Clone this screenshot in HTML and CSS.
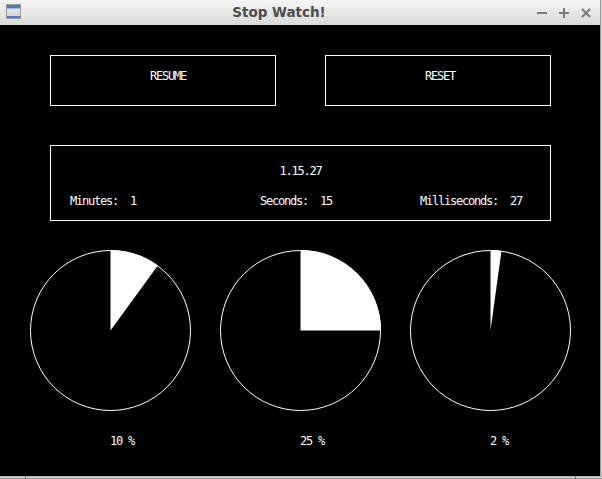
FILE: index.html
```html
<!DOCTYPE html>
<html>
<head>
<meta charset="utf-8">
<title>Stop Watch!</title>
<link rel="stylesheet" href="styles.css">
</head>
<body>
<div class="window">
  <div class="upper">
    <div class="main">
      <div class="titlebar">
        <svg class="app-icon" width="15" height="15" viewBox="0 0 15 15">
          <defs>
            <linearGradient id="ig" x1="0" y1="0" x2="0" y2="1">
              <stop offset="0" stop-color="#f2f2f2"/>
              <stop offset="1" stop-color="#cfcfcf"/>
            </linearGradient>
          </defs>
          <rect x="0.5" y="0.5" width="14" height="14" fill="url(#ig)" stroke="#9a9a9a"/>
          <rect x="1" y="1" width="13" height="3" fill="#4a7cc9"/>
          <rect x="1" y="4" width="13" height="1" fill="#9cb8e4"/>
          <rect x="1" y="12" width="13" height="2" fill="#4a7cc9"/>
        </svg>
        <div class="title">Stop Watch!</div>
        <div class="controls">
          <svg width="10" height="10" viewBox="0 0 10 10"><path d="M0 5H10" class="ctl"/></svg>
          <svg width="10" height="10" viewBox="0 0 10 10"><path d="M0 5H10M5 0V10" class="ctl"/></svg>
          <svg width="10" height="10" viewBox="0 0 10 10"><path d="M1 1L9 9M9 1L1 9" class="ctl"/></svg>
        </div>
      </div>
      <div class="content">
        <div class="buttons">
          <div class="btn">RESUME</div>
          <div class="btn">RESET</div>
        </div>
        <div class="display">
          <div class="time">1.15.27</div>
          <div class="fields">
            <span>Minutes:  1</span>
            <span>Seconds:  15</span>
            <span>Milliseconds:  27</span>
          </div>
        </div>
        <div class="pies">
          <div class="pie">
            <svg width="161" height="161" viewBox="0 0 161 161">
              <circle cx="80.5" cy="80.5" r="80" class="ring"/>
              <path d="M80.5 80.5L80.5 0A80.5 80.5 0 0 1 127.82 15.38Z" class="wedge"/>
            </svg>
            <div class="pct">10 %</div>
          </div>
          <div class="pie">
            <svg width="161" height="161" viewBox="0 0 161 161">
              <circle cx="80.5" cy="80.5" r="80" class="ring"/>
              <path d="M80.5 80.5L80.5 0A80.5 80.5 0 0 1 161 80.5Z" class="wedge"/>
            </svg>
            <div class="pct">25 %</div>
          </div>
          <div class="pie">
            <svg width="161" height="161" viewBox="0 0 161 161">
              <circle cx="80.5" cy="80.5" r="80" class="ring"/>
              <path d="M80.5 80.5L80.5 0A80.5 80.5 0 0 1 91.5 0.8Z" class="wedge"/>
            </svg>
            <div class="pct">2 %</div>
          </div>
        </div>
      </div>
    </div>
    <div class="edge-right"></div>
  </div>
  <div class="edge-bottom">
    <div class="seg seg-a"></div>
    <div class="tick"></div>
    <div class="seg seg-b"></div>
    <div class="tick"></div>
    <div class="seg seg-c"></div>
  </div>
</div>
</body>
</html>
```

FILE: styles.css
```css
html, body {
  margin: 0;
  padding: 0;
  background: #000;
}

.window {
  width: 602px;
  height: 479px;
  display: flex;
  flex-direction: column;
  overflow: hidden;
}

.upper {
  display: flex;
  height: 476px;
}

.main {
  width: 600px;
  display: flex;
  flex-direction: column;
}

.titlebar {
  height: 25px;
  flex: none;
  display: flex;
  align-items: center;
  background: linear-gradient(#f5f5f5, #d9d9d9);
}

.app-icon {
  flex: none;
  align-self: flex-start;
  margin-top: 4px;
  margin-left: 6px;
}

.title {
  flex: 1;
  text-align: center;
  font-family: "DejaVu Sans", sans-serif;
  font-weight: bold;
  font-size: 13.5px;
  line-height: 25px;
  color: #4c4c4c;
}

.controls {
  flex: none;
  display: flex;
  gap: 12px;
  margin-right: 9px;
}

.ctl {
  fill: none;
  stroke: #7b7b7b;
  stroke-width: 2;
}

.content {
  flex: 1;
  background: #000;
  color: #fff;
  padding-top: 30px;
  font-family: "DejaVu Sans Mono", monospace;
  font-size: 12px;
  line-height: 13px;
  letter-spacing: -1.22px;
}

.buttons {
  display: flex;
  gap: 49px;
  padding-left: 50px;
}

.btn {
  width: 125px;
  height: 35px;
  padding: 14px 0 0 99px;
  border: 1px solid #fff;
  white-space: pre;
}

.display {
  margin: 39px 0 0 50px;
  width: 499px;
  height: 74px;
  border: 1px solid #fff;
}

.time {
  padding-top: 19px;
  text-align: center;
  white-space: pre;
}

.fields {
  margin-top: 17px;
  padding-left: 19px;
  display: grid;
  grid-template-columns: 190px 160px auto;
  white-space: pre;
}

.pies {
  margin-top: 29px;
  padding-left: 30px;
  display: flex;
  gap: 29px;
}

.pie {
  width: 161px;
  display: flex;
  flex-direction: column;
}

.pie svg {
  display: block;
}

.ring {
  fill: none;
  stroke: #fff;
  stroke-width: 1;
}

.wedge {
  fill: #fff;
  stroke: none;
}

.pct {
  margin-top: 24px;
  padding-left: 80px;
  white-space: pre;
}

.edge-right {
  width: 2px;
  background: linear-gradient(to right, #9c9c9c 0 1px, #d4d4d4 1px 2px);
}

.edge-bottom {
  height: 3px;
  display: flex;
}

.seg {
  background: linear-gradient(#b3b3b3 0 1px, #dcdcdc 1px 2px, #8c8c8c 2px 3px);
}

.seg-a {
  width: 25px;
}

.seg-b {
  width: 549px;
}

.seg-c {
  flex: 1;
}

.tick {
  width: 1px;
  background: #6f6f6f;
}
```
